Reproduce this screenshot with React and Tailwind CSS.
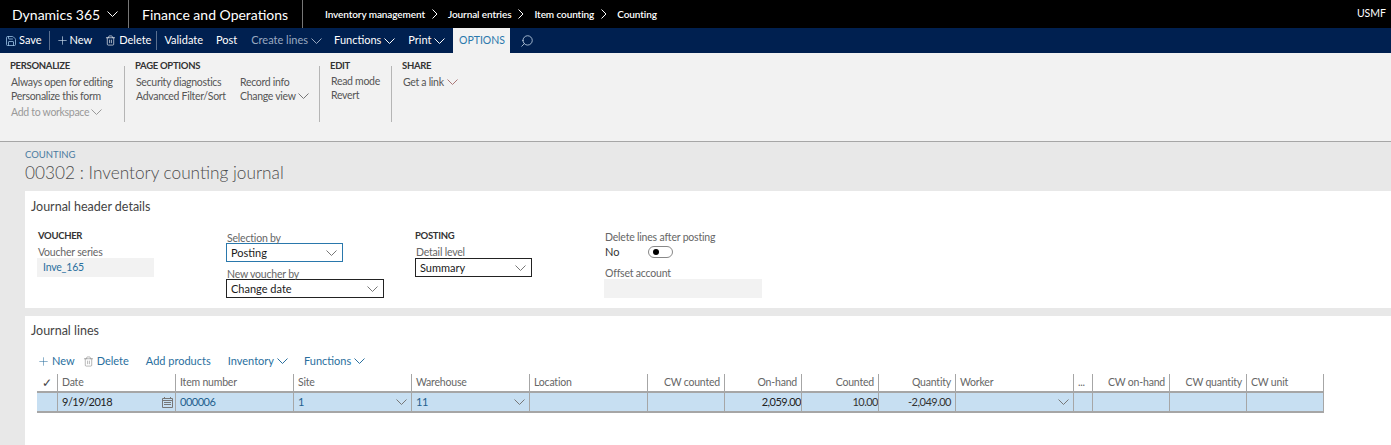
import { Plus, Save, Search, Trash2 } from "lucide-react";

const Chevron = ({ w = 11, h = 6, color = "currentColor" }) => (
  <svg width={w} height={h} viewBox="0 0 11 6" fill="none" stroke={color} strokeWidth="1" className="shrink-0">
    <path d="M0.5 0.5 L5.5 5.5 L10.5 0.5" />
  </svg>
);

const Crumb = () => (
  <svg width="6" height="10" viewBox="0 0 6 10" fill="none" stroke="#fff" strokeWidth="1" className="ml-[7px] mr-[10px] shrink-0">
    <path d="M0.5 0.5 L5 5 L0.5 9.5" />
  </svg>
);

const NavItem = ({ children, className = "" }) => (
  <span className={`flex items-center whitespace-nowrap ${className}`}>{children}</span>
);

const Select = ({ value, width, active }) => (
  <div className={`flex h-[19px] items-center justify-between border pl-[4px] pr-[5px] text-[11px] leading-none text-[#1a1a1a] ${active ? "border-[#2a78ac]" : "border-[#222]"} ${width}`}>
    <span>{value}</span>
    <Chevron color="#777" />
  </div>
);

const Label = ({ children, className = "" }) => (
  <div className={`whitespace-nowrap text-[10.5px] leading-[12px] tracking-[-0.2px] text-[#666] ${className}`}>{children}</div>
);

const GroupTitle = ({ children }) => (
  <div className="whitespace-nowrap text-[9.5px] font-bold leading-[13px] tracking-[-0.3px] text-[#333]">{children}</div>
);

const Divider = () => <div className="mt-[7px] h-[56px] w-px bg-[#b5b5b5]" />;

const columns = [
  { name: "Date", value: "9/19/2018", calendar: true, dark: true },
  { name: "Item number", value: "000006", link: true },
  { name: "Site", value: "1", arrow: true, link: true },
  { name: "Warehouse", value: "11", arrow: true, link: true },
  { name: "Location", value: "" },
  { name: "CW counted", value: "", right: true },
  { name: "On-hand", value: "2,059.00", right: true, dark: true, flush: true },
  { name: "Counted", value: "10.00", right: true, flush: true },
  { name: "Quantity", value: "-2,049.00", right: true },
  { name: "Worker", value: "", arrow: true },
  { name: "...", value: "" },
  { name: "CW on-hand", value: "", right: true },
  { name: "CW quantity", value: "", right: true },
  { name: "CW unit", value: "" },
];

const gridCols = "grid-cols-[20px_118px_118px_118px_118px_118px_77px_77px_77px_77px_118px_19px_77px_77px_78px]";

const App = () => {
  return (
    <div className="h-[445px] w-[1391px] overflow-hidden bg-[#e8e8e8] font-['Lato','Open_Sans',sans-serif]">
      <header className="flex h-[28px] items-center bg-black text-white">
        <div className="flex h-full w-[129px] items-center gap-[7px] border-r border-[#777] pl-[12px]">
          <span className="text-[14px]">Dynamics 365</span>
          <Chevron color="#fff" />
        </div>
        <div className="flex h-full w-[174px] items-center border-r border-[#777] pl-[13px] text-[14px]">
          Finance and Operations
        </div>
        <nav className="ml-[22px] flex items-center text-[10px] font-semibold tracking-[-0.1px]">
          <span>Inventory management</span>
          <Crumb />
          <span>Journal entries</span>
          <Crumb />
          <span>Item counting</span>
          <Crumb />
          <span>Counting</span>
        </nav>
        <span className="ml-auto pr-[5px] text-[10.5px]">USMF</span>
      </header>

      <div className="flex h-[25px] items-center bg-[#002050] text-[11px] text-white">
        <NavItem className="ml-[5px] gap-[2px]"><Save size={12} strokeWidth={1.6} color="#9cc3e6" />Save</NavItem>
        <span className="ml-[7px] h-[19px] w-px bg-[#5a6f8f]" />
        <NavItem className="ml-[6px] gap-[1px]"><Plus size={13} strokeWidth={1.2} color="#cfe0f0" />New</NavItem>
        <NavItem className="ml-[13px] gap-[3px]"><Trash2 size={11} strokeWidth={1.4} />Delete</NavItem>
        <span className="ml-[5px] h-[19px] w-px bg-[#5a6f8f]" />
        <NavItem className="ml-[7px]">Validate</NavItem>
        <NavItem className="ml-[13px]">Post</NavItem>
        <NavItem className="ml-[14px] gap-[3px] text-[#9aa9c0]">Create lines<Chevron /></NavItem>
        <NavItem className="ml-[12px] gap-[3px]">Functions<Chevron /></NavItem>
        <NavItem className="ml-[13px] gap-[3px]">Print<Chevron /></NavItem>
        <div className="ml-[8px] flex h-full w-[57px] items-center justify-center bg-[#f2f2f2] text-[10.5px] text-[#2a78ac]">OPTIONS</div>
        <Search size={14} strokeWidth={1.3} color="#cfe0f0" className="ml-[10px] -scale-x-100" />
      </div>

      <div className="flex h-[89px] border-b border-[#a6a6a6] bg-[#f2f2f2] pt-[6px] text-[10.5px] leading-[14px] tracking-[-0.3px] text-[#555]">
        <section className="ml-[10px] flex w-[114px] flex-col whitespace-nowrap">
          <GroupTitle>PERSONALIZE</GroupTitle>
          <div className="mt-[3px] pl-px">Always open for editing</div>
          <div className="pl-px">Personalize this form</div>
          <div className="mt-[2px] flex items-center gap-[2px] pl-px text-[#999]">Add to workspace<Chevron color="#999" /></div>
        </section>
        <Divider />
        <section className="ml-[10px] flex w-[184px] flex-col whitespace-nowrap">
          <GroupTitle>PAGE OPTIONS</GroupTitle>
          <div className="mt-[3px] flex pl-px">
            <div className="w-[104px]">
              <div>Security diagnostics</div>
              <div>Advanced Filter/Sort</div>
            </div>
            <div>
              <div>Record info</div>
              <div className="flex items-center gap-[2px]">Change view<Chevron color="#777" /></div>
            </div>
          </div>
        </section>
        <Divider />
        <section className="ml-[10px] flex w-[61px] flex-col whitespace-nowrap">
          <GroupTitle>EDIT</GroupTitle>
          <div className="mt-[2px] pl-px">Read mode</div>
          <div className="pl-px">Revert</div>
        </section>
        <Divider />
        <section className="ml-[10px] flex flex-col whitespace-nowrap">
          <GroupTitle>SHARE</GroupTitle>
          <div className="mt-[3px] flex items-center gap-[3px] pl-px">Get a link<Chevron color="#a77" /></div>
        </section>
      </div>

      <div className="h-[49px] pl-[25px] pt-[7px]">
        <div className="text-[9.5px] leading-[12px] text-[#4a7ba0]">COUNTING</div>
        <div className="mt-[1px] text-[17.25px] font-light leading-[22px] text-[#4d4d4d]">00302 : Inventory counting journal</div>
      </div>

      <section className="ml-[25px] h-[117px] bg-white pl-[6px] pt-[7px]">
        <h2 className="text-[12.5px] leading-[17px] text-[#444]">Journal header details</h2>
        <div className="mt-[13px] flex">
          <div className="ml-[7px] w-[188px] pt-[1px]">
            <GroupTitle>VOUCHER</GroupTitle>
            <Label className="mt-[4px]">Voucher series</Label>
            <div className="-ml-px flex h-[19px] w-[117px] items-center bg-[#f2f2f2] pl-[6px] text-[10.5px] tracking-[-0.2px] text-[#2a6f9e]">Inve_165</div>
          </div>
          <div className="w-[189px] pt-[4px]">
            <Label className="-mb-px pl-px">Selection by</Label>
            <Select value="Posting" width="w-[117px]" active />
            <Label className="-mb-px mt-[6px] pl-px">New voucher by</Label>
            <Select value="Change date" width="w-[158px]" />
          </div>
          <div className="w-[189px] pt-[1px]">
            <GroupTitle>POSTING</GroupTitle>
            <Label className="mt-[4px] pl-px">Detail level</Label>
            <Select value="Summary" width="w-[117px]" />
          </div>
          <div className="pt-[3px]">
            <Label className="pl-px">Delete lines after posting</Label>
            <div className="mt-px flex h-[16px] items-center pl-px text-[11px] text-[#333]">
              <span className="w-[43px]">No</span>
              <span className="flex h-[12px] w-[25px] items-center rounded-full border border-[#888] pl-[4px]">
                <span className="size-[6px] rounded-full bg-black" />
              </span>
            </div>
            <Label className="mt-[7px] pl-px">Offset account</Label>
            <div className="h-[19px] w-[158px] bg-[#f2f2f2]" />
          </div>
        </div>
      </section>

      <section className="ml-[25px] mt-[8px] h-[129px] bg-white pl-[6px] pt-[6px]">
        <h2 className="text-[12.5px] leading-[17px] text-[#444]">Journal lines</h2>
        <div className="mt-[13px] flex h-[18px] items-center pl-[6px] text-[11px] text-[#2a6f9e]">
          <NavItem className="gap-[2px]"><Plus size={13} strokeWidth={1} />New</NavItem>
          <NavItem className="ml-[8px] gap-[3px]"><Trash2 size={11} strokeWidth={1} color="#666" />Delete</NavItem>
          <NavItem className="ml-[17px]">Add products</NavItem>
          <NavItem className="ml-[17px] gap-[3px]">Inventory<Chevron /></NavItem>
          <NavItem className="ml-[16px] gap-[3px]">Functions<Chevron /></NavItem>
        </div>
        <div className={`ml-[6px] mt-[4px] grid w-[1287px] ${gridCols}`}>
          <div className="flex h-[19px] items-center justify-center border-b-2 border-[#a6a6a6] pt-[1px] text-[12px] text-[#444]">✓</div>
          {columns.map((col) => (
            <div
              key={col.name}
              className={`flex h-[19px] items-center truncate border-b-2 border-l border-[#a6a6a6] px-[4px] pt-[1px] text-[10.5px] tracking-[-0.2px] text-[#666] ${col.right ? "justify-end" : ""} ${col.name === "CW unit" ? "border-r" : ""}`}
            >
              {col.name}
            </div>
          ))}
          <div className="h-[20px] border-b-2 border-[#a6a6a6] bg-[#c7dff2]" />
          {columns.map((col) => (
            <div
              key={col.name}
              className={`flex h-[20px] items-center justify-between border-b-2 border-l border-[#a6a6a6] bg-[#c7dff2] pl-[4px] text-[11px] tracking-[-0.5px] ${col.flush ? "" : col.calendar ? "pr-[2px]" : "pr-[4px]"} ${col.dark ? "text-[#222]" : col.link ? "text-[#1f5f8f]" : "text-[#333]"} ${col.right ? "justify-end" : ""} ${col.name === "CW unit" ? "border-r" : ""}`}
            >
              <span>{col.value}</span>
              {col.arrow && <Chevron color="#777" />}
              {col.calendar && (
                <svg width="11" height="11" viewBox="0 0 11 11" fill="none" stroke="#777" className="shrink-0">
                  <path d="M0.5 1.5 H10.5 V10.5 H0.5 Z M0.5 3.5 H10.5 M2.5 0 V2 M8.5 0 V2 M2 5.5 H9 M2 7.5 H9" />
                </svg>
              )}
            </div>
          ))}
        </div>
      </section>
    </div>
  );
};

export default App;
